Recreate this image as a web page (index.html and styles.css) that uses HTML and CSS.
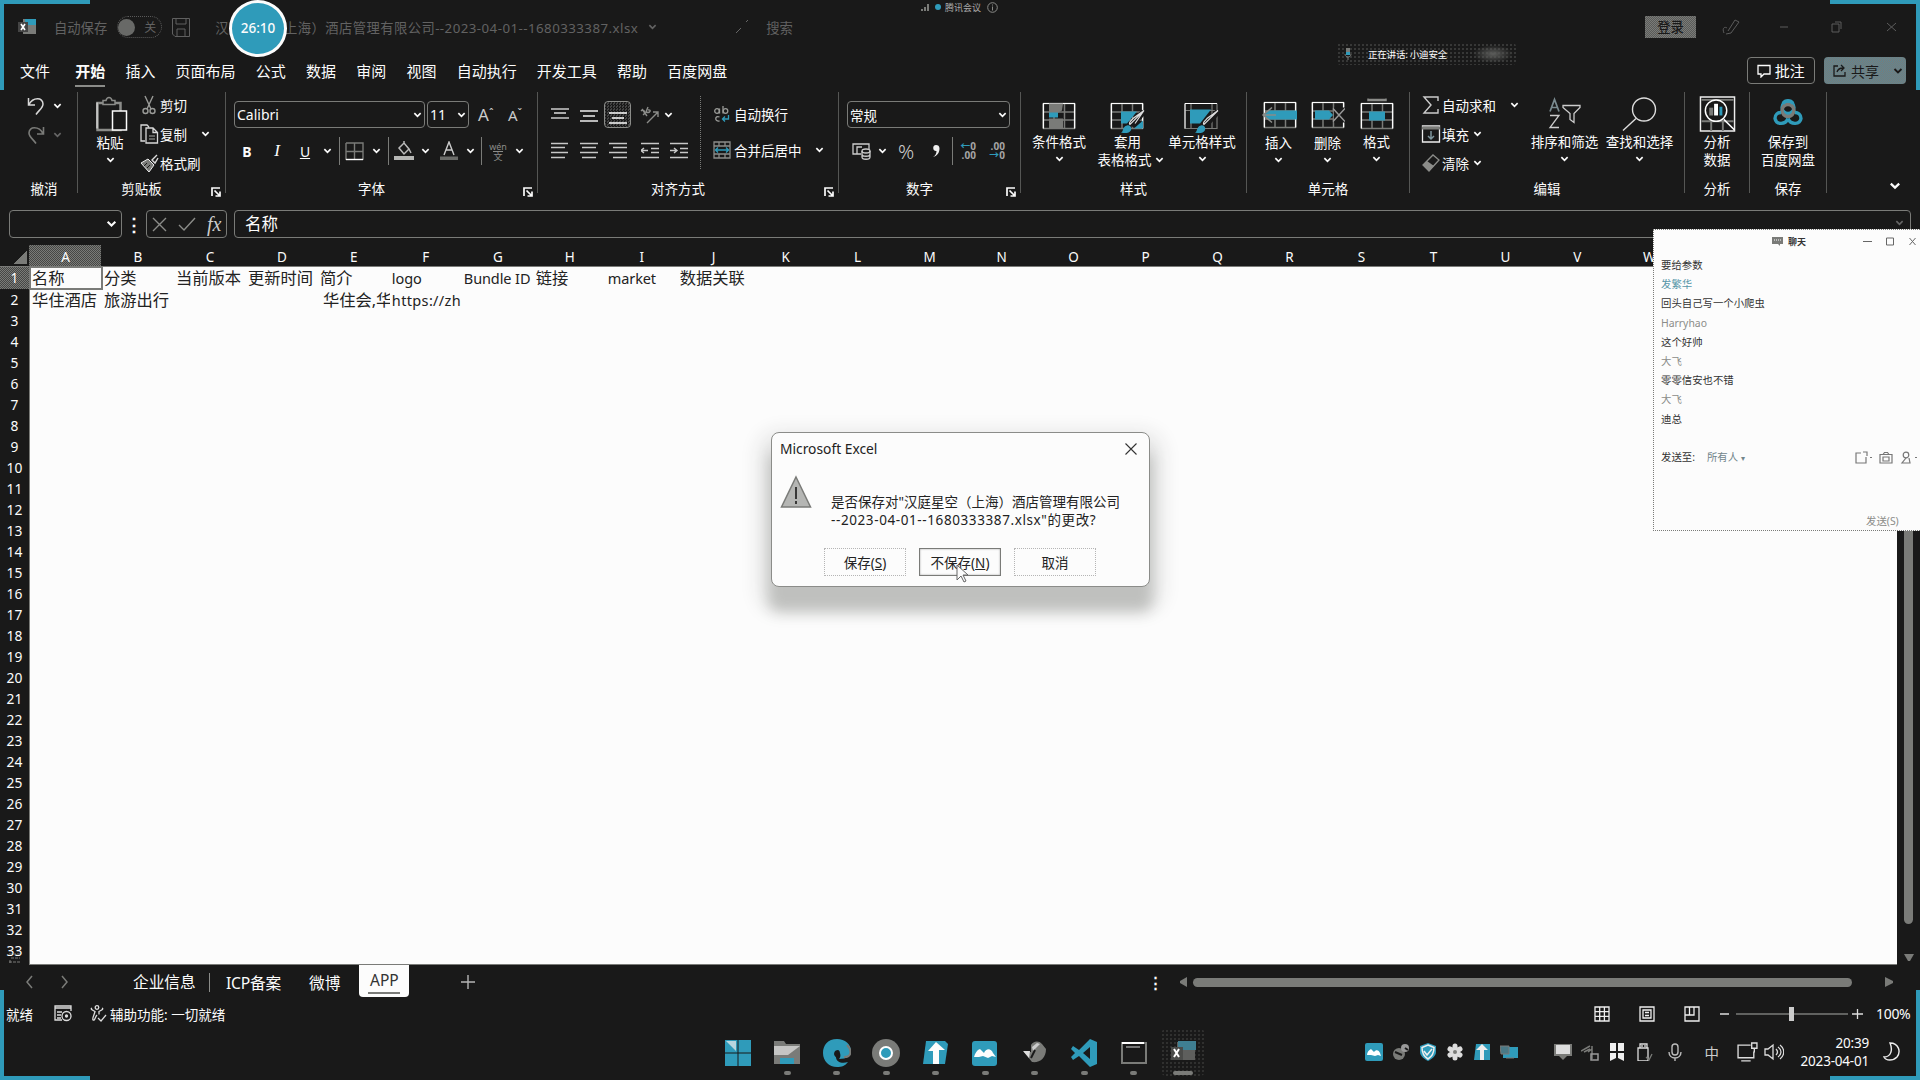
FILE: index.html
```
<!DOCTYPE html>
<html lang="zh-CN">
<head>
<meta charset="utf-8">
<title>Excel</title>
<link rel="stylesheet" href="styles.css">
</head>
<body>
<svg width="0" height="0" class="defs">
  <symbol id="chev" viewBox="0 0 10 6"><path d="M1.500 1l3.500 3.400L8.500 1" fill="none" stroke="currentColor" stroke-width="1.900"/></symbol>
  <symbol id="launch" viewBox="0 0 10 10"><path d="M1 9V1h8M3.500 3.500l5 5M9 4.500V9H4.500" fill="none" stroke="currentColor" stroke-width="1.700"/></symbol>
  <symbol id="table" viewBox="0 0 34 32"><path d="M1 5h32M1 13.500h32M1 21.500h32M1 30V5M12 5v25M22.500 5v25M33 5v25M1 30h32" fill="none" stroke="#7a7b78" stroke-width="1.500"/><path d="M1.500 30V5h31v25" fill="none" stroke="#fcfcfc" stroke-width="1.200"/></symbol>
</svg>
<div class="app">
  <header class="titlebar">
    <svg class="logo" width="20" height="18" viewBox="0 0 20 18"><path d="M6 1h13v15H6z" fill="#7a7b78"/><path d="M8 1h11v6H8z" fill="#2f9bba"/><path d="M1 4h10v10H1z" fill="#444"/><path d="M4 6l4 6M8 6l-4 6" stroke="#fff" stroke-width="1.600"/></svg>
    <span class="autosave">自动保存</span>
    <span class="toggle"><i></i><b>关</b></span>
    <svg class="save" width="18" height="19" viewBox="0 0 18 19" fill="none" stroke="#606060"><path d="M.5.5h17v18H3l-2.500-2.500zM4 1v5h10V1M5 18v-7h8v7"/></svg>
    <span class="filename">汉庭星空（上海）酒店管理有限公司--2023-04-01--1680333387.xlsx</span>
    <svg class="namechev" width="9" height="6"><use href="#chev"/></svg>
    <svg class="searchicon" width="13" height="14" viewBox="0 0 13 14"><path d="M1 13l5-5M11 2l2-2" stroke="#666"/></svg>
    <span class="search">搜索</span>
    <span class="login">登录</span>
    <svg class="winbtns" width="180" height="20" viewBox="0 0 180 20" fill="none" stroke="#5c5c5c"><path d="M5 16c-2-4 0-7 3-5M9 14l7-11 4 2-8 11-5 1M61 10h8M113 7h7v8h-7zM116 5h6v7M168 6l9 8M177 6l-9 8"/></svg>
  </header>

  <nav class="tabs">
    <span>文件</span><span class="on">开始</span><span>插入</span><span>页面布局</span><span>公式</span><span>数据</span><span>审阅</span><span>视图</span><span>自动执行</span><span>开发工具</span><span>帮助</span><span>百度网盘</span>
    <button class="comment"><svg width="14" height="14" viewBox="0 0 14 14"><path d="M1 1.500h12v8.500H7l-3 3v-3H1z" fill="none" stroke="#fcfcfc" stroke-width="1.300"/></svg>批注</button>
    <button class="share"><svg width="13" height="13" viewBox="0 0 13 13" fill="none" stroke="#191919" stroke-width="1.300"><path d="M5 2H1v10h11V8M4 8c1-3 3-4 6-4M8 1l3 3-3 3"/></svg>共享<svg class="sc" width="10" height="6"><use href="#chev"/></svg></button>
  </nav>

  <section class="ribbon">
    <div class="group g-undo">
      <div class="body rows3">
        <div class="r"><svg width="19" height="20" viewBox="0 0 19 20" fill="none" stroke="#d8d8d8" stroke-width="1.500"><path d="M1.500 2v7H8M2 8.500C6 1 16 1 16 8c0 4-4 6-7 10.500"/></svg><svg class="c" width="9" height="6"><use href="#chev"/></svg></div>
        <div class="r dim"><svg width="19" height="20" viewBox="0 0 19 20" fill="none" stroke="#7a7b78" stroke-width="1.600"><path d="M16.500 2v7H10M16 8.500C12 1 2 1 2 8c0 4 4 6 7 10.500"/></svg><svg class="c" width="9" height="6"><use href="#chev"/></svg></div>
      </div>
      <div class="label">撤消</div>
    </div>
    <div class="group g-clip">
      <div class="body cols">
        <div class="big w50 low"><svg width="32" height="36" viewBox="0 0 32 36" fill="none"><path d="M1.500 7.500h23v27h-23z" stroke="#8b8c89" stroke-width="2.500"/><path d="M7 9V5h3c1-4 5-4 6 0h3v4z" fill="#191919" stroke="#8b8c89" stroke-width="1.500"/><path d="M1 33V7" stroke="#fcfcfc"/><path d="M16.500 15.500h14v19h-14z" fill="#191919" stroke="#fcfcfc" stroke-width="1.500"/></svg><span>粘贴</span><svg class="c" width="9" height="6"><use href="#chev"/></svg></div>
        <div class="list">
          <div><svg width="20" height="20" viewBox="0 0 20 20" fill="none" stroke="#9a9b98" stroke-width="1.400"><path d="M6 1l6 13M14 1L8 14"/><circle cx="6.500" cy="16" r="2.500"/><circle cx="13.500" cy="16" r="2.500"/></svg><span>剪切</span></div>
          <div><svg width="20" height="20" viewBox="0 0 20 20" fill="none" stroke="#d8d8d8" stroke-width="1.300"><path d="M6 17H2V1h6l2 2M7 4h7l4.500 4.500V19H7zM14 4v4.500h4"/><path d="M10 12h6M10 15h6" stroke="#7a7b78"/></svg><span>复制</span><svg class="c" width="9" height="6"><use href="#chev"/></svg></div>
          <div><svg width="20" height="20" viewBox="0 0 20 20"><path d="M18 2l-5 5 3 3 3-5" fill="none" stroke="#ddd" stroke-width="1.400"/><path d="M2 10l7-4 6 6-5 7z" fill="#7a7b78" stroke="#eee"/><path d="M5 13l3-3M8 15l3-3" stroke="#191919"/></svg><span>格式刷</span></div>
        </div>
      </div>
      <div class="label"><span>剪贴板</span><svg width="10" height="10"><use href="#launch"/></svg></div>
    </div>
    <div class="group g-font">
      <div class="body rows2">
        <div class="fr1">
          <div class="combo">Calibri<svg width="9" height="6"><use href="#chev"/></svg></div>
          <div class="combo">11<svg width="9" height="6"><use href="#chev"/></svg></div>
          <span class="abig">A<small>ˆ</small></span><span class="asm">A<small>ˇ</small></span>
        </div>
        <div class="fr2">
          <b>B</b><i class="ital">I</i><u>U</u><svg width="9" height="6"><use href="#chev"/></svg><hr>
          <svg width="19" height="19" viewBox="0 0 19 19" fill="none" stroke="#7a7b78" stroke-width="1.400"><path d="M1 1h17v17M1 1v17M9.500 1v17M1 9.500h17"/><path d="M1 17.500h17" stroke="#fff"/></svg><svg width="9" height="6"><use href="#chev"/></svg><hr>
          <svg width="20" height="20" viewBox="0 0 20 20"><path d="M5 7l5-5 5 6-5 5zM10 2V0M15 8l2 4" fill="none" stroke="#bbb" stroke-width="1.500"/><path d="M0 15h20v4H0z" fill="#b5b6b4"/></svg><svg width="9" height="6"><use href="#chev"/></svg>
          <svg width="20" height="20" viewBox="0 0 20 20"><path d="M5 14l5-13 5 13M7 9h6" fill="none" stroke="#ccc" stroke-width="1.400"/><path d="M1 15.500h18v3.500H1z" fill="#6a6b68"/></svg><svg width="9" height="6"><use href="#chev"/></svg><hr>
          <span class="wen">wén<em>文</em></span><svg width="9" height="6"><use href="#chev"/></svg>
        </div>
      </div>
      <div class="label"><span>字体</span><svg width="10" height="10"><use href="#launch"/></svg></div>
    </div>
    <div class="group g-align">
      <div class="body cols">
        <div class="al">
          <svg width="18" height="18" viewBox="0 0 18 18"><path d="M0 3h18M0 12h18" stroke="#ccc" stroke-width="1.300"/><path d="M3 7h12" stroke="#fff" stroke-width="1.300"/></svg>
          <svg width="18" height="18" viewBox="0 0 18 18"><path d="M0 5h18M3 10h12M0 15h18" stroke="#eee" stroke-width="1.400"/></svg>
          <span class="sel"><svg width="18" height="18" viewBox="0 0 18 18"><path d="M0 7h18M3 12h12M0 17h18" stroke="#fff" stroke-width="1.400"/></svg></span>
          <svg width="20" height="18" viewBox="0 0 20 18" fill="none" stroke="#8b8c89" stroke-width="1.400"><path d="M7 17L18 6M13 6h5v5M1 5c3-3 5 2 2 4M2 3l5 7M8 1l-2 5c4 2 6-3 2-2"/></svg><svg width="9" height="6"><use href="#chev"/></svg>
          <svg width="18" height="18" viewBox="0 0 18 18" class="al-l"><path d="M0 1.500h17M0 5.500h14M0 10.500h17M0 15.500h14"/></svg>
          <svg width="18" height="18" viewBox="0 0 18 18" class="al-l"><path d="M0 1.500h18M2 5.500h14M0 10.500h18M2 15.500h14"/></svg>
          <svg width="18" height="18" viewBox="0 0 18 18" class="al-l"><path d="M0 1.500h18M4 5.500h14M0 10.500h18M4 15.500h14"/></svg>
          <svg width="18" height="18" viewBox="0 0 18 18" class="al-l"><path d="M0 1.500h18M10 6.500h8M10 10.500h8M0 15.500h18M0 8.500h7M3 6L0 8.500 3 11"/></svg>
          <svg width="18" height="18" viewBox="0 0 18 18" class="al-l"><path d="M0 1.500h18M10 6.500h8M10 10.500h8M0 15.500h18M0 8.500h7M4 6l3 2.500L4 11"/></svg>
        </div>
        <div class="wrap">
          <div><svg width="18" height="18" viewBox="0 0 18 18" fill="none" stroke="#9a9b98" stroke-width="1.300"><circle cx="4" cy="6" r="2.300"/><path d="M6.500 3.500v5M10 1v7.500"/><circle cx="12.500" cy="6" r="2.300"/><path d="M6.500 12c-5-2-5 5 0 4"/><path d="M15.500 10v4H9.500M12 11.500L9.500 14l2.500 2.500" stroke="#2f9bba"/></svg><span>自动换行</span></div>
          <div><svg width="18" height="18" viewBox="0 0 18 18" fill="none" stroke="#8b8c89" stroke-width="1.300"><path d="M1 1h16v16H1zM1 5h16M1 13h16M6 1v4M12 1v4M6 13v4M12 13v4"/><path d="M2 9h14M5 6.500L2.500 9 5 11.500M13 6.500L15.500 9 13 11.500" stroke="#2f9bba"/></svg><span>合并后居中</span><svg class="c" width="9" height="6"><use href="#chev"/></svg></div>
        </div>
      </div>
      <div class="label"><span>对齐方式</span><svg width="10" height="10"><use href="#launch"/></svg></div>
    </div>
    <div class="group g-num">
      <div class="body rows2">
        <div class="nr1"><div class="combo">常规<svg width="9" height="6"><use href="#chev"/></svg></div></div>
        <div class="nr2">
          <svg width="19" height="18" viewBox="0 0 19 18" fill="none" stroke="#ccc" stroke-width="1.300"><path d="M9 12H1V2h16v5M5 12V5h5"/><ellipse cx="14" cy="9" rx="4" ry="2"/><path d="M10 9v6c0 3 8 3 8 0V9M10 12c0 3 8 3 8 0"/></svg><svg width="9" height="6"><use href="#chev"/></svg>
          <span class="pct">%</span><svg width="8" height="14" viewBox="0 0 8 14"><path d="M4 1a3 3 0 1 0 .5 6C4.500 10 3 12 1 13c4-1 6.500-4 6.500-8.500C7.500 2 6 1 4 1z" fill="#eee"/></svg><hr>
          <span class="dec"><i>←</i>0<br>.00</span><span class="dec">.00<br><i>→</i>0</span>
        </div>
      </div>
      <div class="label"><span>数字</span><svg width="10" height="10"><use href="#launch"/></svg></div>
    </div>
    <div class="group g-style">
      <div class="body cols">
        <div class="big w76"><svg width="34" height="36" viewBox="0 -2 34 36"><use href="#table" width="34" height="32"/><path d="M7 5h14l-1 7-7 4H7zM7 20h14v10H7z" fill="#7a7b78"/><path d="M7 14h9v5H7z" fill="#2f9bba"/></svg><span>条件格式</span><svg class="c" width="9" height="6"><use href="#chev"/></svg></div>
        <div class="big w61"><svg width="36" height="36" viewBox="0 -2 36 36"><use href="#table" width="34" height="32"/><path d="M11 13h16l-10 12h-6zM33 22v8h-9z" fill="#2f9bba"/><path d="M34 13L21 27" stroke="#191919" stroke-width="6"/><path d="M34 12L20 26c-2-2 1-3 3-6zl-9 13" fill="none" stroke="#ddd" stroke-width="1.200"/><path d="M11 34c3-1 1-6 6-7 3-1 6 3 3 6-2 2-6 2-9 1z" fill="#2f9bba"/></svg><span>套用</span><span class="two">表格格式 <svg width="9" height="6"><use href="#chev"/></svg></span></div>
        <div class="big w88"><svg width="36" height="36" viewBox="0 -2 36 36"><path d="M1 5h32M1 5v25h32V5M7 5v25M28 5v25M1 12h32" fill="none" stroke="#7a7b78" stroke-width="1.200"/><path d="M1 30V5h32" fill="none" stroke="#fff"/><path d="M6 11h21L16 25H6z" fill="#2f9bba"/><path d="M34 13L21 27" stroke="#191919" stroke-width="6"/><path d="M34 12L20 26c-2-2 1-3 3-6z" fill="none" stroke="#ddd" stroke-width="1.200"/><path d="M11 34c3-1 1-6 6-7 3-1 6 3 3 6-2 2-6 2-9 1z" fill="#2f9bba"/></svg><span>单元格样式</span><svg class="c" width="9" height="6"><use href="#chev"/></svg></div>
      </div>
      <div class="label">样式</div>
    </div>
    <div class="group g-cell">
      <div class="body cols">
        <div class="big w49 low"><svg width="36" height="36" viewBox="-2 -2 36 36"><use href="#table" width="34" height="32"/><path d="M6 13h28v9H6l-5-4.500z" fill="#2f9bba"/><path d="M9 10l-9 7.500L9 25M1 17.500h12" fill="none" stroke="#8b8c89" stroke-width="1.500"/></svg><span>插入</span><svg class="c" width="9" height="6"><use href="#chev"/></svg></div>
        <div class="big w49 low"><svg width="34" height="36" viewBox="0 -2 34 36"><use href="#table" width="34" height="32"/><path d="M23 10h11v15H23z" fill="#191919"/><path d="M4 13h14l4 4.500-4 4.500H4z" fill="#2f9bba"/><path d="M22 11l12 13M34 11L22 24" stroke="#999" stroke-width="1.500"/></svg><span>删除</span><svg class="c" width="9" height="6"><use href="#chev"/></svg></div>
        <div class="big w49"><svg width="34" height="36" viewBox="0 -2 34 36"><use href="#table" width="34" height="32"/><path d="M8 0v2h18V0M8 1h18" fill="none" stroke="#8b8c89" stroke-width="1.500"/><path d="M9 13h16v9H9z" fill="#2f9bba"/></svg><span>格式</span><svg class="c" width="9" height="6"><use href="#chev"/></svg></div>
      </div>
      <div class="label">单元格</div>
    </div>
    <div class="group g-edit">
      <div class="body cols">
        <div class="list">
          <div><svg width="20" height="20" viewBox="0 0 20 20"><path d="M17 6V2H3l7 8-7 8h14v-4" fill="none" stroke="#ccc" stroke-width="1.400"/></svg><span>自动求和</span><svg class="c" width="9" height="6"><use href="#chev"/></svg></div>
          <div><svg width="20" height="20" viewBox="0 0 20 20"><path d="M1.500 2v16h17V2z" fill="none" stroke="#eee" stroke-width="1.300"/><path d="M1 4h18" stroke="#7a7b78" stroke-width="3"/><path d="M10 7v8M7 12l3 3 3-3" fill="none" stroke="#7f979f" stroke-width="1.500"/></svg><span>填充</span><svg class="c n" width="9" height="6"><use href="#chev"/></svg></div>
          <div><svg width="20" height="20" viewBox="0 0 20 20"><path d="M2 12L12 2l6 5L8 18z" fill="none" stroke="#8b8c89" stroke-width="1.300"/><path d="M2 12l4-4 7 5-5 5z" fill="#8b8c89"/></svg><span>清除</span><svg class="c n" width="9" height="6"><use href="#chev"/></svg></div>
        </div>
        <div class="big w75 e1"><svg width="34" height="36" viewBox="0 0 34 36" fill="none" stroke="#ccc" stroke-width="1.300"><path d="M2 15L6.500 3 11 15M3.500 11h6" stroke="#7a8b90" stroke-width="1.700"/><path d="M2 19h9L2 31h9M15 9h17v2l-6 6v9l-4-3v-6l-7-6z"/></svg><span>排序和筛选</span><svg class="c" width="9" height="6"><use href="#chev"/></svg></div>
        <div class="big w75"><svg width="36" height="36" viewBox="0 0 36 36" fill="none" stroke="#ddd" stroke-width="1.400"><circle cx="22" cy="13" r="11.500"/><path d="M14 22L1 34"/></svg><span>查找和选择</span><svg class="c" width="9" height="6"><use href="#chev"/></svg></div>
      </div>
      <div class="label">编辑</div>
    </div>
    <div class="group g-ana">
      <div class="body cols"><div class="big w65"><svg width="37" height="38" viewBox="0 0 37 38" fill="none"><path d="M1 1h35v35H1z" stroke="#eee" stroke-width="1.500"/><path d="M2 4h33M2 26h33M12 26v10M24 26v10" stroke="#7a7b78" stroke-width="2"/><circle cx="17" cy="15" r="11" fill="#191919" stroke="#fff" stroke-width="1.500"/><path d="M25 24l11 11" stroke="#fff" stroke-width="1.500"/><path d="M12 12v8" stroke="#7a7b78" stroke-width="4"/><path d="M17 8v12" stroke="#fff" stroke-width="4"/><path d="M22 11v9" stroke="#2f9bba" stroke-width="3"/></svg><span>分析</span><span>数据</span></div></div>
      <div class="label">分析</div>
    </div>
    <div class="group g-save">
      <div class="body cols"><div class="big w77"><svg width="30" height="36" viewBox="0 0 30 36" fill="none" stroke-width="3.400"><circle cx="15" cy="11" r="6" stroke="#2f9bba"/><circle cx="15" cy="14" r="6" stroke="#7a7b78"/><path d="M10 7a6 6 0 0 1 10 0M15 22c-3 7-12 6-13 0 0-4 3-6 6-6M15 22c3 7 12 6 13 0 0-4-3-6-6-6" stroke="#2f9bba"/></svg><span>保存到</span><span>百度网盘</span></div></div>
      <div class="label">保存</div>
    </div>
    <svg class="collapse" width="12" height="8"><use href="#chev"/></svg>
  </section>

  <section class="formula">
    <div class="namebox"><svg width="11" height="8"><use href="#chev"/></svg></div>
    <span class="vdots">⋮</span>
    <div class="fx"><svg width="15" height="15" viewBox="0 0 15 15"><path d="M1 1l13 13M14 1L1 14" stroke="#8b8c89" stroke-width="1.400"/></svg><svg width="18" height="14" viewBox="0 0 18 14"><path d="M1 8l5 5L17 1" fill="none" stroke="#8b8c89" stroke-width="1.400"/></svg><i>fx</i></div>
    <div class="input">名称<svg width="9" height="6"><use href="#chev"/></svg></div>
  </section>

  <main class="sheet">
    <div class="colhead">
      <span class="corner"></span><span class="cur">A</span><span>B</span><span>C</span><span>D</span><span>E</span><span>F</span><span>G</span><span>H</span><span>I</span><span>J</span><span>K</span><span>L</span><span>M</span><span>N</span><span>O</span><span>P</span><span>Q</span><span>R</span><span>S</span><span>T</span><span>U</span><span>V</span><span>W</span>
    </div>
    <div class="gridrow">
      <div class="rowhead"><span class="cur">1</span><span>2</span><span>3</span><span>4</span><span>5</span><span>6</span><span>7</span><span>8</span><span>9</span><span>10</span><span>11</span><span>12</span><span>13</span><span>14</span><span>15</span><span>16</span><span>17</span><span>18</span><span>19</span><span>20</span><span>21</span><span>22</span><span>23</span><span>24</span><span>25</span><span>26</span><span>27</span><span>28</span><span>29</span><span>30</span><span>31</span><span>32</span><span>33</span><svg width="14" height="12" viewBox="0 0 14 12"><path d="M1 2h11M3 6h9M1 10h12M2 8v3" stroke="#7a7b78" stroke-dasharray="3 1"/></svg></div>
      <div class="cells">
        <div class="row first"><span class="active">名称</span><span>分类</span><span>当前版本</span><span>更新时间</span><span>简介</span><span class="lat">logo</span><span class="lat">Bundle ID</span><span>链接</span><span class="lat">market</span><span>数据关联</span></div>
        <div class="row"><span>华住酒店</span><span>旅游出行</span><span></span><span></span><span class="clip">华住会,华</span><span class="lat url">https://zh</span></div>
      </div>
      <div class="vscroll"><i></i><svg width="10" height="8" viewBox="0 0 10 8"><path d="M0 0h10L6 7H4z" fill="#7a7b78"/></svg></div>
    </div>
  </main>

  <section class="sheettabs">
    <svg class="nav" width="44" height="14" viewBox="0 0 44 14" fill="none" stroke="#7a7b78" stroke-width="1.500"><path d="M6 1L1 7l5 6M36 1l5 6-5 6"/></svg>
    <span class="st s1">企业信息</span><span class="st s2">ICP备案</span><span class="st s3">微博</span><span class="st act">APP</span>
    <svg class="plus" width="14" height="14" viewBox="0 0 14 14"><path d="M7 0v14M0 7h14" stroke="#b5b5b5" stroke-width="1.400"/></svg>
    <span class="vdots h">⋮</span>
    <svg width="7" height="10" viewBox="0 0 7 10"><path d="M7 0v10L0 6V4z" fill="#7a7b78"/></svg>
    <i class="thumb"></i>
    <svg width="8" height="10" viewBox="0 0 8 10"><path d="M0 0v10l8-4V4z" fill="#7a7b78"/></svg>
  </section>

  <footer class="status">
    <span>就绪</span>
    <svg class="rec" width="18" height="17" viewBox="0 0 18 17" fill="none" stroke="#ddd" stroke-width="1.300"><path d="M8 15H1V1h16v5M1 3h16M3 7h5M3 10h4M3 13h4"/><circle cx="12.500" cy="11" r="4.500"/><circle cx="12.500" cy="11" r="1" fill="#fff"/></svg>
    <svg class="acc" width="17" height="17" viewBox="0 0 17 17" fill="none" stroke="#ddd" stroke-width="1.300"><circle cx="7" cy="2.500" r="1.800"/><path d="M2 3c-2 1 0 2 3 3.500-1 4-3 7-2 8.500 2 1 2-3 4-5M12 3c2 1 0 2-3 3.500v3M8 13l3 3 5-6"/></svg>
    <span>辅助功能: 一切就绪</span>
    <svg class="views" width="106" height="16" viewBox="0 0 106 16" fill="none" stroke="#eee" stroke-width="1.300"><path d="M1 1h14v14H1zM5.700 1v14M10.400 1v14M1 5.700h14M1 10.400h14M46 1h14v14H46zM49 4h8v8h-8zM51 6.500h4M51 9.500h4M91 1h14v14H91zM91 9h9V1M95.500 1v8"/></svg>
    <svg class="zoom" width="144" height="14" viewBox="0 0 144 14"><path d="M0 7h9M132 7h11M137.500 2v10" stroke="#ddd" stroke-width="1.300"/><path d="M16 7h112" stroke="#7a7b78" stroke-width="1.600"/><path d="M69 0h5v14h-5z" fill="#ccc"/></svg>
    <span class="pc">100%</span>
  </footer>

  <footer class="taskbar">
    <div class="tasks">
      <span><svg width="28" height="28" viewBox="0 0 28 28"><path d="M1 1h12.500v12.500H1zM14.500 1H27v12.500H14.500zM1 14.500h12.500V27H1zM14.500 14.500H27V27H14.500z" fill="#2f9bba"/><path d="M2 2h10v10z" fill="#b8d6df"/></svg></span>
      <span class="run"><svg width="28" height="28" viewBox="0 0 28 28"><path d="M1 2h10l2 3h14v20H1z" fill="#7a7b78"/><path d="M1 7h26L15 16H1z" fill="#c5c5c4"/><path d="M7 19h14v6H7z" fill="#2f9bba"/></svg></span>
      <span class="run"><svg width="28" height="28" viewBox="0 0 28 28"><path d="M14 0C5 0 0 6 0 14s6 14 14 14c5 0 8-1 11-5-6 2-12 0-12-5 0-3 2-4 4-4 1 3 0 5-1 6 8 0 12-3 12-8 0-7-6-12-14-12z" fill="#2f9bba"/><path d="M14 19c-5-3-3-8 1-8 3 1 2 5 0 8z" fill="#191919"/><path d="M24 6c5 5 5 12-3 12" stroke="#7a7b78" stroke-width="2" fill="none"/></svg></span>
      <span class="run"><svg width="28" height="28" viewBox="0 0 28 28"><circle cx="14" cy="14" r="14" fill="#7a7b78"/><circle cx="14" cy="14" r="6" fill="#2f9bba" stroke="#fff" stroke-width="2"/></svg></span>
      <span class="run"><svg width="28" height="28" viewBox="0 0 28 28"><path d="M4 2h19l3 3-3 20H1z" fill="#2f9bba"/><path d="M14 3l9 8h-6v14h-6V12H6z" fill="#fcfcfc"/></svg></span>
      <span class="run"><svg width="28" height="28" viewBox="0 0 28 28"><rect x="1" y="2" width="25" height="25" rx="3" fill="#2f9bba"/><path d="M3 18c1-4 3-7 6-8l4 4c2-5 7-5 9 0l3 4-4-1-4 2-5-2-4 1z" fill="#fcfcfc"/></svg></span>
      <span class="run"><svg width="28" height="28" viewBox="0 0 28 28"><path d="M10 6c2-4 8-5 11-1l4 5c0 9-6 14-14 13L3 13h7z" fill="#7a7b78"/><path d="M2 12h7l-1 7z" fill="#ddd"/><path d="M11 8l5-4 3 1-7 7z" fill="#ccc"/><path d="M14 11l-4 8" stroke="#191919" stroke-width="2"/></svg></span>
      <span class="run"><svg width="28" height="28" viewBox="0 0 28 28"><path d="M20 0l7 3v22l-7 3L9 17l-6 4-2-3 4-4-4-4 2-3 6 4zM20 8l-7 6 7 6z" fill="#2f9bba" fill-rule="evenodd"/></svg></span>
      <span class="run"><svg width="28" height="28" viewBox="0 0 28 28"><path d="M2 4h24v20H2z" fill="none" stroke="#7a7b78" stroke-width="2"/><path d="M2 4h22" stroke="#fff" stroke-width="2"/><path d="M6 8h14" stroke="#777" stroke-width="2"/></svg></span>
      <span class="run now"><svg width="28" height="28" viewBox="0 0 28 28"><path d="M8 3h18v18H8z" fill="#5e5f5d"/><path d="M9 2h18v9H9z" fill="#3f7f92"/><path d="M2 8h12v13H2z" fill="#4a4b49"/><path d="M5 10l5 8M10 10l-5 8" stroke="#fff" stroke-width="2"/></svg></span>
    </div>
    <div class="tray">
      <svg viewBox="0 0 18 18"><rect width="18" height="18" rx="2" fill="#2f9bba"/><path d="M2 12c0-3 2-5 4-6l3 3c2-3 5-2 6 1l1 3-3-1-3 1-4-1z" fill="#fff"/></svg>
      <svg viewBox="0 0 18 18"><circle cx="7" cy="11" r="6" fill="#7a7b78"/><circle cx="13" cy="5" r="4" fill="#999"/><path d="M3 9l7 3M13 5l3 2" stroke="#191919" stroke-width="2"/></svg>
      <svg viewBox="0 0 18 18"><path d="M9 0l8 3v6c0 4-4 7-8 9-4-2-8-5-8-9V3z" fill="#2f9bba"/><path d="M9 2l6 2.500c0 6-2 9-6 11.500-4-2.500-6-5.500-6-11.500zM5 8l3 4 5-6" fill="none" stroke="#eee" stroke-width="1.500"/></svg>
      <svg viewBox="0 0 18 18"><path d="M9 3v12M4 6l10 6M14 6L4 12" stroke="#ddd" stroke-width="5" stroke-linecap="round"/><circle cx="9" cy="9" r="2" fill="#7a7b78"/></svg>
      <svg viewBox="0 0 18 18"><path d="M3 1h14v16H1z" fill="#2f9bba"/><path d="M9 1l6 6h-4v10H7V7H3z" fill="#eee"/></svg>
      <svg viewBox="0 0 18 18"><path d="M3 4h15v11H3z" fill="#2f9bba"/><path d="M0 3h9v8H1zM6 15h8" fill="#4a7986" stroke="#7a7b78"/></svg>
      <svg class="t7" viewBox="0 0 18 18"><path d="M0 1h18v12H0z" fill="#7a7b78"/><path d="M2 2h14v9H2z" fill="#ddd"/><path d="M5 13h8l-4 4z" fill="#7a7b78"/></svg>
      <svg viewBox="0 0 18 18" fill="none" stroke="#7a7b78" stroke-width="1.500"><path d="M0 8l9-5M3 9l6-3M7 9l4-3M11 3v13"/><path d="M10 11h7v6h-7z" stroke="#999"/></svg>
      <svg viewBox="0 0 18 18"><path d="M2 0h6v8H2zM10 0h6v8h-6zM2 10h6v5l-6 3zM10 10h6v8l-6-3z" fill="#eee"/></svg>
      <svg viewBox="0 0 18 18" fill="none" stroke="#ddd" stroke-width="1.300"><path d="M5 5V1h7v4M3 5h10v13H3zM7 2v2M10 2v2"/><path d="M11 14l3 3 3-6" stroke="#7a7b78"/></svg>
      <svg class="mic" viewBox="0 0 18 18" fill="none" stroke="#bbb" stroke-width="1.400"><rect x="6" y="1" width="6" height="11" rx="3"/><path d="M3 9c0 8 12 8 12 0M9 15v3"/></svg>
      <span class="zh">中</span>
      <svg class="net" viewBox="0 0 20 20" fill="none" stroke="#ddd" stroke-width="1.300"><path d="M13 3H1v12h15V9M4 18h9M14 1h5v5h-5zM16.500 6v4"/></svg>
      <svg class="vol" viewBox="0 0 20 18" fill="none" stroke="#ddd" stroke-width="1.300"><path d="M1 6v6h3l5 4V2L4 6zM12 6c2 2 2 4 0 6M14 4c4 3 4 7 0 10M16 2c5 4 5 10 0 14"/></svg>
      <span class="clock">20:39<br>2023-04-01</span>
      <svg class="moon" viewBox="0 0 18 20"><path d="M8 1c9 0 11 9 7 14-4 4-11 4-13 0 7 0 9-7 6-14z" fill="none" stroke="#eee" stroke-width="1.400"/></svg>
    </div>
  </footer>
</div>

<i class="edge tl"></i><i class="edge tr"></i><i class="edge bl"></i><i class="edge br"></i>
<div class="timer">26:10</div>
<div class="meeting"><svg width="22" height="10" viewBox="0 0 22 10"><path d="M1 9V7M4 9V5M7 9V2" stroke="#7a7b78" stroke-width="2"/><circle cx="17" cy="5" r="3" fill="#2f9bba"/></svg>腾讯会议<svg width="11" height="11" viewBox="0 0 11 11" fill="none" stroke="#8b8c89"><circle cx="5.500" cy="5.500" r="4.800"/><path d="M5.500 2.500v1M5.500 4.500v4"/></svg></div>
<div class="speaker"><svg width="8" height="12" viewBox="0 0 8 12"><rect x="2" width="4" height="7" fill="#7a7b78"/><path d="M2 4h4v3H2z" fill="#2f9bba"/><path d="M1 6c0 4 6 4 6 0M4 9v3" stroke="#7a7b78" fill="none"/></svg><span>正在讲话: 小迪安全</span><i></i></div>

<aside class="chat">
  <div class="chead"><svg width="11" height="9" viewBox="0 0 11 9"><path d="M0 0h11v7H8v2L6 7H0z" fill="#7a7b78"/><path d="M2 3h7" stroke="#fff" stroke-dasharray="1"/></svg><b>聊天</b><svg class="cw" width="54" height="9" viewBox="0 0 54 9" fill="none" stroke="#666"><path d="M0 4.500h9M23.500 1h7v7h-7zM46.500 1l6 7M52.500 1l-6 7"/></svg></div>
  <p>要给参数</p><p class="who bl">发繁华</p><p>回头自己写一个小爬虫</p><p class="who">Harryhao</p><p>这个好帅</p><p class="who">大飞</p><p>零零信安也不错</p><p class="who">大飞</p><p>迪总</p>
  <div class="to"><span>发送至:</span><span class="all">所有人<small>▾</small></span><svg width="62" height="13" viewBox="0 0 62 13" fill="none" stroke="#777" stroke-width="1.200"><path d="M6 2H1v10h10V6M8 1h4v4M15 6.500h2M25 3.500h12v8.500H25zM28 3.500l1.500-2h3l1.500 2M28 6h6v4h-6zM51 7l-4 5h8l-1-5M60 6.500h2"/><circle cx="51" cy="4" r="2.800"/></svg></div>
  <div class="send">发送(S)</div>
</aside>

<div class="dialog">
  <div class="dt"><span>Microsoft Excel</span><svg width="12" height="12" viewBox="0 0 12 12"><path d="M.5.5l11 11M11.500.5l-11 11" stroke="#333" stroke-width="1.100"/></svg></div>
  <div class="db"><svg width="32" height="34" viewBox="0 0 32 34"><path d="M16 2l14.500 30h-29z" fill="#b5b6b4" stroke="#7a7b78" stroke-width="1.500"/><path d="M16 12v12M16 26v3" stroke="#191919" stroke-width="1.600"/></svg><p><span>是否保存对"汉庭星空（上海）酒店管理有限公司</span><span class="l2">--2023-04-01--1680333387.xlsx"的更改?</span></p></div>
  <div class="dbtn"><button>保存(<u>S</u>)</button><button class="def">不保存(<u>N</u>)</button><button>取消</button></div>
  <svg class="cursor" width="13" height="20" viewBox="0 0 13 20"><path d="M1 1v15l4-4 3 6 2-1-3-6h5z" fill="#fcfcfc" stroke="#666"/></svg>
</div>
</body>
</html>
```
FILE: styles.css
```
*{box-sizing:border-box}
body{margin:0;width:1920px;height:1080px;overflow:hidden;background:#191919;color:#fcfcfc;font-family:"Noto Sans","Noto Sans CJK SC",sans-serif;font-size:13.5px;position:relative}
.defs{position:absolute}
svg{display:block;flex:none}
button{font:inherit;color:inherit;background:none;padding:0;margin:0}
hr{border:0;border-left:1px solid #7a7b78;height:28px;margin:0}
.app{display:flex;flex-direction:column;height:1080px}
.combo,.filename,.label,.big span,.list span,.tabs span{white-space:nowrap}

.titlebar{height:54px;display:flex;align-items:center;color:#626262;font-size:13.3px;padding-left:17px}
.autosave{margin-left:17px}
.toggle{margin-left:10px;width:45px;height:22px;border:1px dotted #5a5a5a;border-radius:11px;display:flex;align-items:center;gap:9px}
.toggle i{width:17px;height:17px;border-radius:50%;background:#686967}
.toggle b{font-weight:400;font-size:12px}
.save{margin-left:10px}
.filename{margin-left:25px;width:427px;letter-spacing:.45px}
.namechev{margin-left:6px}
.searchicon{margin-left:78px}
.search{margin-left:18px}
.login{margin-left:auto;width:51px;height:22px;line-height:22px;text-align:center;color:#191919;font-weight:500;background:repeating-conic-gradient(#7a7b78 0 25%,#5a5b59 0 50%) 0 0/2px 2px}
.winbtns{margin:0 21px 0 23px}

.tabs{height:38px;display:flex;align-items:center;font-size:15px;padding:0 14px 5px 20px;gap:20.200px}
.tabs .on{font-weight:700;margin-left:5px;border-bottom:2px solid #8b8c89;height:27px;margin-top:5px;line-height:22px}
.comment{margin-left:auto;margin-right:-11px;width:68px;height:27px;border:1px solid #7a7b78;border-radius:4px;display:flex;align-items:center;justify-content:center;gap:4px}
.share{width:82px;height:27px;border:0;border-radius:4px;background:repeating-conic-gradient(#7a7b78 0 25%,#5d8793 0 50%) 0 0/2px 2px;color:#191919;display:flex;align-items:center;padding-left:9px;gap:5px;font-size:14px}
.share .sc{margin-left:9px}

.ribbon{height:112px;display:flex}
.group{border-right:1px solid #555654;display:flex;flex-direction:column;height:101px;flex:none}
.group .body{height:87px;flex:none}
.label{height:20px;line-height:18px;display:flex;align-items:center;justify-content:center;flex:none}
.label span{flex:1;text-align:center}
.label svg{margin:5px 4px 0 6px}
.cols{display:flex}
.rows3 .r{height:29px;display:flex;align-items:center;padding-left:27px;gap:7px;padding-bottom:2px}
.dim{color:#666}
.g-undo{width:78px}.g-undo .label{padding-left:11px}
.g-clip{width:148px}.g-font{width:312px}.g-align{width:301px}.g-num{width:182px}.g-style{width:226px}.g-cell{width:163px}.g-edit{width:275px}.g-ana{width:65px}.g-save{width:77px}
.big{display:flex;flex-direction:column;align-items:center;padding-top:4px}
.big>svg:first-child{height:37px}
.big span{line-height:18px;height:18px}
.big .c{margin-top:5px}
.big.low{padding-top:3px}
.big.low>svg:first-child{height:39px;padding-bottom:2px}
.big .two{display:flex;align-items:center;gap:3px;margin-left:6px}
.w50{width:50px;margin-left:7px}.w76{width:76px}.w61{width:61px}.w88{width:88px}.w49{width:49px}.w75{width:75px}.w65{width:65px}.w77{width:77px}
.w50>svg:first-child{margin-left:3px}
.g-cell .cols{padding-left:7px}
.list>div{height:29px;display:flex;align-items:center;padding-bottom:3px}
.list span{margin-left:1px}
.g-clip .list{padding-left:4px}
.list .c{margin-left:14px}.list .c.n{margin-left:4px}
.g-edit .list{padding-left:11px;width:117px}
.rows2{padding-top:4px}
.fr1{display:grid;grid-template-columns:191px 42px 30px auto;gap:2px;padding-left:8px;height:37px;align-items:center}
.combo{height:27px;border:1px solid #7a7b78;border-radius:4px;display:flex;align-items:center;justify-content:space-between;padding:0 2px;font-size:14px}
.abig{font-size:17px;padding-left:7px;color:#ccc}.asm{font-size:15px;color:#ccc;padding-left:5px}
.fr1 small{font-size:11px;vertical-align:4px}
.fr2{display:grid;grid-template-columns:30px 30px 26px 18px 6px 24px 20px 4px 28px 14px 34px 8px 14px 20px 22px;justify-items:center;align-items:center;padding-left:6px;height:36px;font-size:14px}
.ital{font-family:"Liberation Serif",serif;font-size:17px}
.wen{font-size:9px;line-height:9px;display:flex;flex-direction:column;align-items:center;color:#8b8c89}
.wen em{font-style:normal;border-top:1px solid #8b8c89}
.al{display:grid;grid-template-columns:29px 29px 29px 29px 29px;grid-template-rows:37px 36px;align-items:center;justify-items:center;padding:4px 0 0 7px;width:161px}
.al>:nth-child(5){margin-left:-14px}
.al>:nth-child(4),.al>:nth-child(9){margin-left:7px}
.al>:nth-child(10){margin-left:7px}
.sel{width:27px;height:27px;border:1px solid #8b8c89;border-radius:4px;padding:4px;background:repeating-conic-gradient(#191919 0 25%,#444 0 50%) 0 0/3px 3px}
.al-l path{fill:none;stroke:#c8c8c8;stroke-width:1.400}
.wrap{border-left:1px dotted #7a7b78;padding:0 0 0 12px;margin:4px 0 10px 1px}
.wrap>div{height:36px;display:flex;align-items:center;gap:3px}
.wrap .c{margin-left:10px}
.nr1{height:37px;display:flex;align-items:center;padding-left:8px}
.nr1 .combo{width:163px;font-size:13.500px}
.nr2{display:grid;grid-template-columns:24px 18px 30px 30px 2px 30px 28px;height:36px;align-items:center;justify-items:center;padding-left:10px}
.pct{font-size:20px;color:#ccc;font-weight:300}
.dec{font-size:10px;line-height:9px;color:#a5a5a5;text-align:right;font-weight:700;white-space:nowrap}
.dec i{color:#2f9bba;font-style:normal}
.collapse{margin:90px 0 0 62px}

.formula{height:41px;display:flex;align-items:flex-start;padding:6px 9px 0}
.formula>div{height:28px;border:1px solid #7a7b78;border-radius:4px}
.namebox{width:113px;display:flex;align-items:center;justify-content:flex-end;padding-right:4px}
.vdots{width:24px;text-align:center;font-size:18px;font-weight:700;line-height:28px}
.fx{width:81px;display:flex;align-items:center;padding-left:5px;gap:11px}
.fx i{font:italic 20px "Liberation Serif",serif;color:#ccc}
.input{margin-left:7px;flex:1;font-size:16.500px;line-height:25px;padding:0 6px 0 10px;display:flex;justify-content:space-between}
.input svg{color:#666;margin-top:9px}

.colhead{height:22px;display:flex;font-size:13.500px;border-bottom:1px solid #7a7b78;line-height:24px;overflow:hidden}
.colhead span{width:71.970px;flex:none;text-align:center}
.colhead .corner{background:linear-gradient(135deg,transparent 55%,#7a7b78 55%);margin:4px 2px 2px 12px;width:15px}
.colhead .corner+span{padding-left:1px;margin-right:1px}
.colhead .cur,.rowhead .cur{background:repeating-conic-gradient(#7a7b78 0 25%,#464745 0 50%) 0 0/2px 2px}
.sheet{height:720px;overflow:hidden}
.gridrow{display:flex;height:698px}
.rowhead{width:30px;border-right:1px solid #7a7b78;font-size:13.800px}
.rowhead span{display:block;height:21px;line-height:22px;text-align:center}
.rowhead span:first-child{height:22px}
.rowhead svg{margin:-9px 0 0 8px}
.cells{flex:1;background:#fcfcfc;color:#222;border-bottom:1px solid #7a7b78}
.row{display:flex;height:21px;line-height:22px;font-size:16.300px}
.row.first{height:22px}
.row span{width:71.970px;flex:none;padding-left:2px;white-space:nowrap}
.row .lat{font-size:14.500px;letter-spacing:-.1px}
.row .url{letter-spacing:.35px}
.row .active{outline:2px solid #7a7b78;outline-offset:-1px}
.row .clip{overflow:hidden;padding-left:5px}
.vscroll{width:23px;display:flex;flex-direction:column;align-items:center}
.vscroll i{width:9px;height:657px;border-radius:0 0 5px 5px;background:#7a7b78;margin-bottom:30px}

.sheettabs{height:34px;display:flex;align-items:center;font-size:15.700px}
.nav{margin-left:26px}
.st{white-space:nowrap}
.s1{margin-left:63px;width:77px;border-right:1px solid #8b8c89;line-height:19px}
.s2{margin-left:16px;width:57px;letter-spacing:-.2px}
.s3{margin-left:26px}
.act{margin-left:19px;width:50px;height:32px;align-self:flex-start;background:#fcfcfc;color:#333;border-radius:0 0 4px 4px;text-align:center;line-height:30px;font-size:15.500px;position:relative}
.act::after{content:"";position:absolute;left:9px;right:9px;bottom:3px;height:2.500px;background:#7a7b78}
.plus{margin-left:52px}
.vdots.h{margin-left:668px;font-size:15px}
.vdots.h+svg{margin-left:13px}
.thumb{width:659px;height:9px;border-radius:5px;background:#7a7b78;margin:0 33px 0 6px}

.status{height:29px;display:flex;align-items:center;padding:0 7px 0 6px;font-size:13.500px;white-space:nowrap}
.rec{margin-left:21px}.acc{margin:0 3px 0 18px}
.views{margin-left:auto;margin-right:20px}
.zoom{margin-right:12px}
.pc{font-size:14px;width:37px;letter-spacing:-.3px}

.taskbar{height:51px;display:flex}
.tasks{margin-left:713px;display:flex}
.tasks span{width:49.500px;height:50px;display:flex;flex-direction:column;align-items:center;padding-top:11px}
.tasks .run::after{content:"";width:7px;height:4px;border-radius:2px;background:#7a7b78;margin-top:4px;flex:none}
.tasks .now{width:44px;height:47px;margin:1px 0 0 2px;padding-top:10px;background:radial-gradient(#4a4b49 .6px,transparent .8px) 0 0/4px 4px;border-radius:5px}
.tasks .now::after{width:20px}
.tray{margin-left:160px;display:flex;align-items:center;height:48px}
.tray svg{width:18px;height:18px;margin-right:9.200px}
.tray .t7{margin-left:26px}
.tray .mic{margin-left:4px}
.tray .zh{font-size:14.500px;margin:0 18px 0 11px;color:#ccc}
.tray .net{width:21px;height:21px;margin-right:6px}
.tray .vol{width:20px;margin-right:0}
.clock{width:85px;text-align:right;line-height:18px;font-size:13.500px;letter-spacing:-.2px}
.tray .moon{margin:0 0 0 13px;height:20px}

.edge{position:absolute;width:90px;height:90px;border:0 solid #2f9bba;pointer-events:none}
.tl{left:0;top:0;border-width:4px 0 0 4px}.tr{right:0;top:0;border-width:4px 4px 0 0}
.bl{left:0;bottom:0;border-width:0 0 4px 4px}.br{right:0;bottom:0;border-width:0 4px 4px 0}
.timer{position:absolute;left:229px;top:0;width:58px;height:57px;border:3px solid #fcfcfc;border-radius:50%;background:#2f9bba;text-align:center;line-height:51px;font-size:13.500px;font-weight:500}
.meeting{position:absolute;left:921px;top:1px;height:12px;display:flex;align-items:center;gap:2px;font-size:9px;color:#aaa}
.meeting svg:last-child{margin-left:4px}
.speaker{position:absolute;left:1337px;top:43px;width:179px;height:22px;border-radius:4px;background:radial-gradient(#5a5b59 .6px,transparent .8px) 0 0/4px 4px;font-size:9.500px;display:flex;align-items:center;padding-left:7px;white-space:nowrap}
.speaker span{margin-left:16px;width:80px;letter-spacing:-.2px}
.speaker i{margin-left:25px;width:40px;height:18px;background:radial-gradient(closest-side,#5c5d5b,transparent)}

.chat{position:absolute;left:1653px;top:229px;width:267px;height:302px;background:#fcfcfc;border:1px dotted #7a7b78;border-right:0;color:#333;font-size:10.400px;padding-left:7px;line-height:19.200px}
.chat p{margin:0;height:19.200px}
.chead{height:26px;display:flex;align-items:center;padding:0 0 3px 111px;gap:5px;font-size:9px}
.cw{margin-left:52px}
.who{color:#8b8c89}.who.bl{color:#5596a8}
.to{display:flex;align-items:center;margin-top:19px;height:20px}
.all{margin-left:12px;color:#72858b;width:148px}
.all small{font-size:8px;margin-left:3px}
.send{margin-top:44px;padding-left:205px;color:#8b8c89}

.dialog{position:absolute;left:771px;top:432px;width:379px;height:155px;background:#fcfcfc;border:1px solid #8b8c89;border-radius:8px;color:#222;box-shadow:0 22px 14px 2px #bfc0be,0 12px 20px 12px #e4e4e4}
.dt{height:32px;display:flex;align-items:center;justify-content:space-between;padding:0 12px 1px 8px;font-size:13.800px}
.db{display:flex;padding:10px 0 0 8px;height:75px}
.db p{margin:18px 0 0 19px;line-height:18px;font-size:13.500px;display:flex;flex-direction:column;white-space:nowrap}
.db .l2{letter-spacing:.6px}
.dbtn{display:flex;gap:13px;padding:8px 0 0 52px}
.dbtn button{width:82px;height:28px;border:1px dotted #b5b5b5;font-size:13.500px}
.dbtn .def{border:1.500px solid #7a7b78;box-shadow:inset 0 0 2px #999}
.cursor{position:absolute;left:184px;top:131px}
```
